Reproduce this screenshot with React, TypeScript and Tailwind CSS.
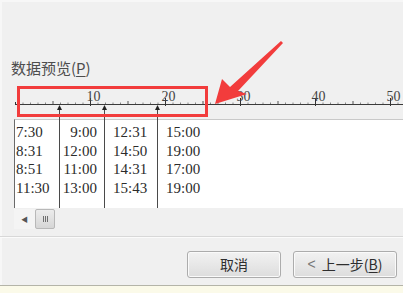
import React from 'react';

const rows = [
    ['7:30', '9:00', '12:31', '15:00'],
    ['8:31', '12:00', '14:50', '19:00'],
    ['8:51', '11:00', '14:31', '17:00'],
    ['11:30', '13:00', '15:43', '19:00'],
];

const CH = 7.5;
const ORIGIN = 15;

function Ruler() {
    const ticks = [];
    for (let i = 0; i <= 52; i++) {
        const x = ORIGIN + CH * i + 0.5;
        if (i === 0) ticks.push(<line key={i} x1={x} x2={x} y1={18} y2={21} stroke="#333" />);
        else if (i % 10 === 0) ticks.push(<line key={i} x1={x} x2={x} y1={14} y2={22} stroke="#333" />);
        else if (i % 5 === 0) ticks.push(<line key={i} x1={x} x2={x} y1={17} y2={20} stroke="#555" />);
        else ticks.push(<line key={i} x1={x} x2={x} y1={18.5} y2={20} stroke="#888" />);
    }
    return (
        <svg width="403" height="35" className="block">
            <line x1={ORIGIN} x2={403} y1={20.5} y2={20.5} stroke="#3a3a3a" />
            {ticks}
            {[10, 20, 30, 40, 50].map((n) => (
                <text
                    key={n}
                    x={ORIGIN + CH * n - 3.5}
                    y={17}
                    fontSize="14"
                    fill="#444"
                    fontFamily="'Liberation Serif', serif"
                >
                    {n}
                </text>
            ))}
        </svg>
    );
}

function Markers() {
    const xs = [59.5, 104.5, 157.5];
    return (
        <svg width="403" height="293" className="absolute inset-0 pointer-events-none">
            {xs.map((x) => (
                <g key={x}>
                    <line x1={x} x2={x} y1={107} y2={208} stroke="#4a4a4a" />
                    <polygon points={`${x},105 ${x - 2.5},110 ${x + 2.5},110`} fill="#222" />
                </g>
            ))}
        </svg>
    );
}

function Annotation() {
    return (
        <>
            <div className="absolute left-[17px] top-[86px] w-[191px] h-[31px] border-[3px] border-[#f23c3c]" />
            <svg width="403" height="293" className="absolute inset-0 pointer-events-none">
                <polygon
                    points="281,41 230,87 222,79 215,104 247,94 238,91 283,43"
                    fill="#f23c3c"
                />
            </svg>
        </>
    );
}

function Button({ children, className }: { children: React.ReactNode; className: string }) {
    return (
        <button
            type="button"
            className={`h-[27px] rounded-[3px] border border-[#acacac] bg-gradient-to-b from-[#f2f2f2] to-[#dddddd] text-[14px] text-[#2e2e2e] flex items-center justify-center shadow-[inset_0_0_0_1px_#fafafa] ${className}`}
        >
            {children}
        </button>
    );
}

export default function App() {
    return (
        <div
            className="relative w-[403px] h-[293px] overflow-hidden bg-[#f0f0f0] shadow-[inset_2px_2px_0_#f7f7f7] flex flex-col"
            style={{ fontFamily: "'Noto Sans CJK SC', sans-serif" }}
        >
            <div className="pt-[58px] pl-[11px] h-[78px] text-[15px] leading-[20px] text-[#4d4d4d]">
                数据预览(<span className="underline underline-offset-2">P</span>)
            </div>

            <div className="mt-[6px]">
                <Ruler />
            </div>

            <div className="ml-[14px] h-[89px] bg-white border-l border-t border-l-[#6a6a6a] border-t-[#c9c9c9] pt-[3px] font-['Liberation_Serif',serif] text-[15px] leading-[18.5px] text-[#2b2b2b] tabular-nums">
                {rows.map((r, i) => (
                    <div key={i} className="flex">
                        <div className="w-[45px] pl-[1px]">{r[0]}</div>
                        <div className="w-[45px] pr-[8px] text-right">{r[1]}</div>
                        <div className="w-[53px] pl-[8px]">{r[2]}</div>
                        <div className="pl-[8px]">{r[3]}</div>
                    </div>
                ))}
            </div>

            <div className="ml-[14px] h-[22px] flex items-center">
                <div className="w-[21px] h-[20px] bg-[#f4f4f4] flex items-center justify-center text-[7px] text-[#555]">
                    ◀
                </div>
                <div className="w-[20px] h-[20px] rounded-[2px] border border-[#b8b8b8] bg-gradient-to-b from-[#ececec] to-[#d6d6d6] flex items-center justify-center gap-[1px]">
                    <span className="w-px h-[6px] bg-[#6f6f6f]" />
                    <span className="w-px h-[6px] bg-[#6f6f6f]" />
                    <span className="w-px h-[6px] bg-[#6f6f6f]" />
                </div>
            </div>

            <div className="mt-[6px] h-[2px] border-t border-[#d8d8d8] bg-[#fbfbfb]" />

            <div className="mt-[13px] flex justify-end gap-[12px] pr-[6px]">
                <Button className="w-[94px]">取消</Button>
                <Button className="w-[104px]">
                    <span className="text-[#777] mr-[6px] font-['Liberation_Sans',sans-serif]">&lt;</span>
                    上一步(<span className="underline underline-offset-2">B</span>)
                </Button>
            </div>

            <div className="mt-[7px] flex-1 border-t border-[#b4b4a8] bg-[#fbfae9]" />

            <Markers />
            <Annotation />
        </div>
    );
}
